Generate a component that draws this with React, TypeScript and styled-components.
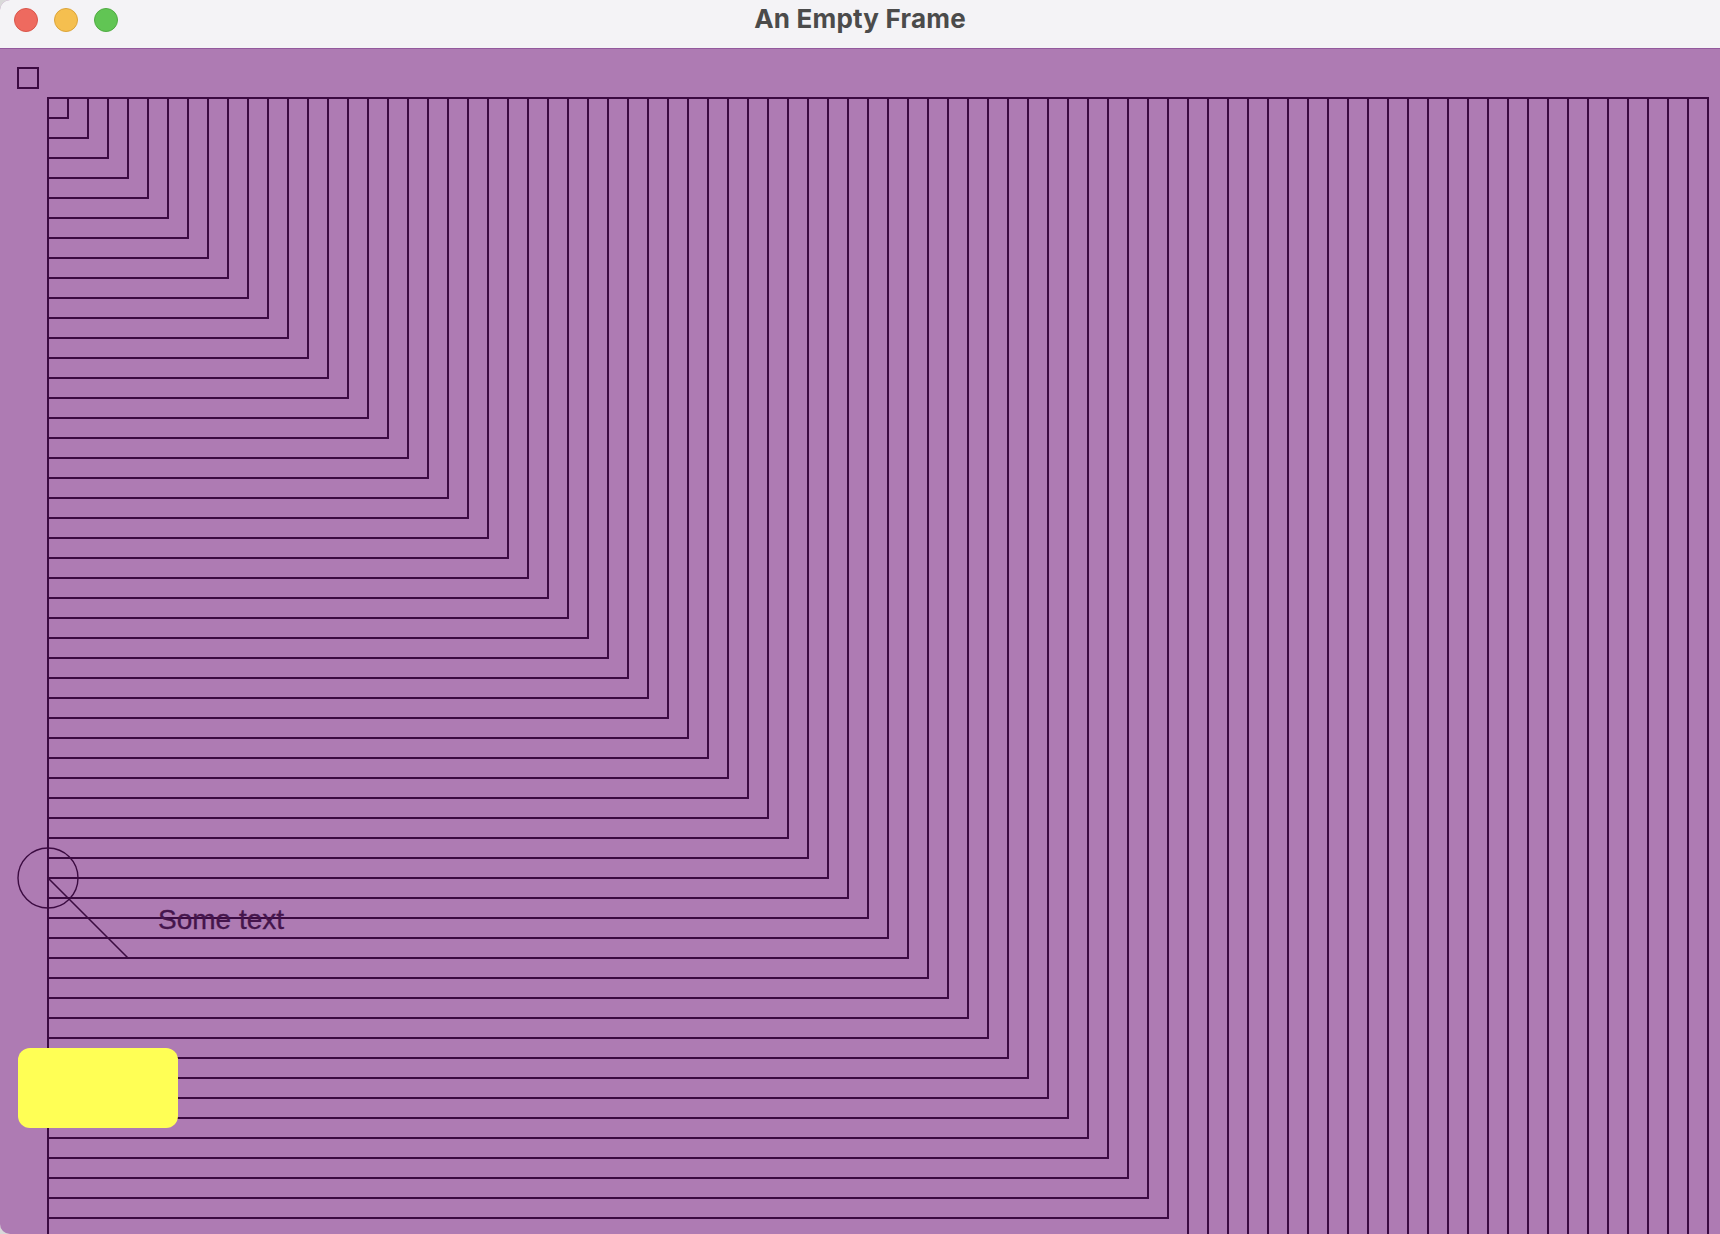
import React from "react";
import styled, { createGlobalStyle } from "styled-components";

const GlobalStyle = createGlobalStyle`
  html, body {
    margin: 0;
    padding: 0;
    background: #d9d9d9;
    overflow: hidden;
  }
`;

const Window = styled.div`
  width: 1720px;
  height: 1234px;
  display: flex;
  flex-direction: column;
  overflow: hidden;
  border-radius: 10px 0 0 10px;
  background: #ae7bb3;
`;

const TitleBar = styled.div`
  height: 48px;
  display: grid;
  grid-template-columns: 1fr auto 1fr;
  align-items: start;
  padding-top: 8px;
  box-sizing: border-box;
  background: #f4f3f6;
`;

const Lights = styled.div`
  display: flex;
  gap: 16px;
  padding-left: 14px;
`;

const Light = styled.span<{ $color: string; $edge: string }>`
  width: 24px;
  height: 24px;
  border-radius: 50%;
  box-sizing: border-box;
  background: ${(p) => p.$color};
  border: 1px solid ${(p) => p.$edge};
`;

const Title = styled.h1`
  margin: 0;
  font-family: Inter, "Liberation Sans", sans-serif;
  font-weight: 700;
  font-size: 26px;
  line-height: 22px;
  letter-spacing: 0.2px;
  color: #4b4b4b;
`;

const Canvas = styled.div`
  flex: 1;
  border-top: 1px solid #93599d;
`;

const Drawing = styled.svg`
  display: block;
  width: 1720px;
  height: 1185px;
`;

const LINE = "#3b0b41";
const GRID_X = 48;
const GRID_Y = 49;
const STEP = 20;
const COUNT = 83;

const App = () => {
  const squares = Array.from({ length: COUNT }, (_, i) => (i + 1) * STEP);

  return (
    <>
      <GlobalStyle />
      <Window>
        <TitleBar>
          <Lights>
            <Light $color="#ee6a5f" $edge="#d9564b" />
            <Light $color="#f5bf4f" $edge="#dba43a" />
            <Light $color="#61c554" $edge="#50ab43" />
          </Lights>
          <Title>An Empty Frame</Title>
          <div />
        </TitleBar>
        <Canvas>
          <Drawing viewBox="0 0 1720 1185">
            <rect x={18} y={19} width={20} height={20} fill="none" stroke={LINE} strokeWidth={2} shapeRendering="crispEdges" />
            {squares.map((s) => (
              <rect
                key={s}
                x={GRID_X}
                y={GRID_Y}
                width={s}
                height={s}
                fill="none"
                stroke={LINE}
                strokeWidth={2}
                shapeRendering="crispEdges"
              />
            ))}
            <circle cx={48} cy={829} r={30} fill="none" stroke={LINE} strokeWidth={1.4} />
            <line x1={48} y1={829} x2={128} y2={909} stroke={LINE} strokeWidth={1.6} />
            <text
              x={158}
              y={880}
              fontFamily="'Liberation Sans', Arial, sans-serif"
              fontSize={28}
              fill="#45154c"
              stroke="#45154c"
              strokeWidth={0.3}
            >
              Some text
            </text>
            <rect x={18} y={999} width={160} height={80} rx={12} ry={12} fill="#ffff55" />
          </Drawing>
        </Canvas>
      </Window>
    </>
  );
};

export default App;
